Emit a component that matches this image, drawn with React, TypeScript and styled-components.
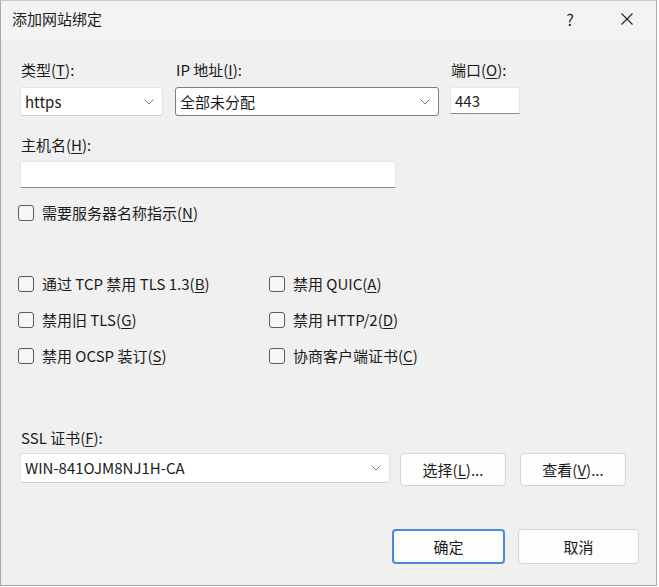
import styled, { createGlobalStyle } from 'styled-components';

const GlobalStyle = createGlobalStyle`
  html, body {
    margin: 0;
    padding: 0;
    background: #ffffff;
  }
  body {
    font-family: "Noto Sans CJK SC", "Noto Sans", sans-serif;
    color: #1b1b1b;
  }
`;

const Window = styled.div`
  width: 657px;
  height: 586px;
  box-sizing: border-box;
  border: 1px solid #a8a8a8;
  border-top-color: #c8c8c8;
  background: #f0f0f0;
  display: flex;
  flex-direction: column;
`;

const TitleBar = styled.div`
  height: 39px;
  box-sizing: border-box;
  display: flex;
  align-items: center;
  padding: 0 0 3px 11px;
  background: #f3f3f3;
  font-size: 15px;
  line-height: 20px;
`;

const TitleText = styled.div`
  flex: 1;
`;

const TitleButton = styled.div<{ $w: number }>`
  width: ${(p) => p.$w}px;
  height: 36px;
  display: flex;
  align-items: center;
  justify-content: center;
  font-size: 16px;
  color: #222;
`;

const Body = styled.div`
  flex: 1;
  display: flex;
  flex-direction: column;
  padding: 20px 16px 0 19px;
  font-size: 15px;
  line-height: 20px;
`;

const Row = styled.div<{ $gap?: number; $top?: number }>`
  display: flex;
  align-items: flex-start;
  gap: ${(p) => p.$gap ?? 0}px;
  margin-top: ${(p) => p.$top ?? 0}px;
`;

const Field = styled.div<{ $w: number; $left?: number }>`
  width: ${(p) => p.$w}px;
  margin-left: ${(p) => p.$left ?? 0}px;
  display: flex;
  flex-direction: column;
`;

const Label = styled.div<{ $gap: number }>`
  height: 20px;
  margin-bottom: ${(p) => p.$gap}px;
  padding-left: 1px;
  white-space: nowrap;
`;

const U = styled.span`
  text-decoration: underline;
  text-underline-offset: 2px;
`;

const SelectBox = styled.div<{ $h: number; $dark?: boolean }>`
  height: ${(p) => p.$h}px;
  box-sizing: border-box;
  background: #ffffff;
  border: 1px solid ${(p) => (p.$dark ? '#7d7d7d' : '#e2e2e2')};
  border-bottom-color: ${(p) => (p.$dark ? '#7d7d7d' : '#cfcfcf')};
  border-radius: 3px;
  display: flex;
  align-items: center;
  padding: 0 8px 0 4px;
  white-space: nowrap;
`;

const SelectValue = styled.div`
  flex: 1;
`;

const TextBox = styled.div<{ $h: number }>`
  height: ${(p) => p.$h}px;
  box-sizing: border-box;
  background: #ffffff;
  border: 1px solid #e6e6e6;
  border-bottom: 1px solid #8a8a8a;
  border-radius: 3px 3px 0 0;
  display: flex;
  align-items: center;
  padding: 0 4px;
`;

const CheckRow = styled.label`
  display: flex;
  align-items: center;
  gap: 8px;
  height: 20px;
  margin-left: -2px;
  white-space: nowrap;
`;

const Box = styled.span`
  width: 16px;
  height: 16px;
  box-sizing: border-box;
  border: 1px solid #5c5c5c;
  border-radius: 3px;
  background: #f6f6f6;
  flex-shrink: 0;
`;

const CheckGrid = styled.div`
  display: grid;
  grid-template-columns: 251px auto;
  row-gap: 16px;
  margin-top: 51px;
`;

const Button = styled.div<{ $w: number; $h: number; $primary?: boolean }>`
  width: ${(p) => p.$w}px;
  height: ${(p) => p.$h}px;
  box-sizing: border-box;
  background: #fdfdfd;
  border: ${(p) => (p.$primary ? '2px solid #4a8ad4' : '1px solid #d3d3d3')};
  border-radius: 4px;
  display: flex;
  align-items: center;
  justify-content: center;
  white-space: nowrap;
`;

const CertButtons = styled.div`
  display: flex;
  gap: 14px;
  margin: 25px 0 0 10px;
`;

const Footer = styled.div`
  display: flex;
  justify-content: flex-end;
  gap: 13px;
  margin-top: 43px;
  padding-right: 1px;
`;

const Chevron = () => (
  <svg width="10" height="6" viewBox="0 0 10 6">
    <path d="M0.5 0.5 L5 5 L9.5 0.5" fill="none" stroke="#7a7a7a" strokeWidth="1" />
  </svg>
);

const CloseIcon = () => (
  <svg width="12" height="12" viewBox="0 0 12 12">
    <path d="M0.5 0.5 L11.5 11.5 M11.5 0.5 L0.5 11.5" stroke="#222" strokeWidth="1.1" />
  </svg>
);

const Check = ({ children }: { children: React.ReactNode }) => (
  <CheckRow>
    <Box />
    <span>{children}</span>
  </CheckRow>
);

const App = () => {
  return (
    <>
      <GlobalStyle />
      <Window>
        <TitleBar>
          <TitleText>添加网站绑定</TitleText>
          <TitleButton $w={56}>?</TitleButton>
          <TitleButton $w={58}>
            <CloseIcon />
          </TitleButton>
        </TitleBar>
        <Body>
          <Row>
            <Field $w={143}>
              <Label $gap={7}>
                类型(<U>T</U>):
              </Label>
              <SelectBox $h={29}>
                <SelectValue>https</SelectValue>
                <Chevron />
              </SelectBox>
            </Field>
            <Field $w={264} $left={12}>
              <Label $gap={7}>
                IP 地址(<U>I</U>):
              </Label>
              <SelectBox $h={29} $dark>
                <SelectValue>全部未分配</SelectValue>
                <Chevron />
              </SelectBox>
            </Field>
            <Field $w={70} $left={11}>
              <Label $gap={7}>
                端口(<U>O</U>):
              </Label>
              <TextBox $h={27}>443</TextBox>
            </Field>
          </Row>

          <Row $top={19}>
            <Field $w={376}>
              <Label $gap={6}>
                主机名(<U>H</U>):
              </Label>
              <TextBox $h={27} />
            </Field>
          </Row>

          <Row $top={15}>
            <Check>
              需要服务器名称指示(<U>N</U>)
            </Check>
          </Row>

          <CheckGrid>
            <Check>
              通过 TCP 禁用 TLS 1.3(<U>B</U>)
            </Check>
            <Check>
              禁用 QUIC(<U>A</U>)
            </Check>
            <Check>
              禁用旧 TLS(<U>G</U>)
            </Check>
            <Check>
              禁用 HTTP/2(<U>D</U>)
            </Check>
            <Check>
              禁用 OCSP 装订(<U>S</U>)
            </Check>
            <Check>
              协商客户端证书(<U>C</U>)
            </Check>
          </CheckGrid>

          <Row $top={62}>
            <Field $w={370}>
              <Label $gap={5}>
                SSL 证书(<U>F</U>):
              </Label>
              <SelectBox $h={30}>
                <SelectValue>WIN-841OJM8NJ1H-CA</SelectValue>
                <Chevron />
              </SelectBox>
            </Field>
            <CertButtons>
              <Button $w={106} $h={33}>
                选择(<U>L</U>)...
              </Button>
              <Button $w={106} $h={33}>
                查看(<U>V</U>)...
              </Button>
            </CertButtons>
          </Row>

          <Footer>
            <Button $w={113} $h={35} $primary>
              确定
            </Button>
            <Button $w={121} $h={35}>
              取消
            </Button>
          </Footer>
        </Body>
      </Window>
    </>
  );
};

export default App;
